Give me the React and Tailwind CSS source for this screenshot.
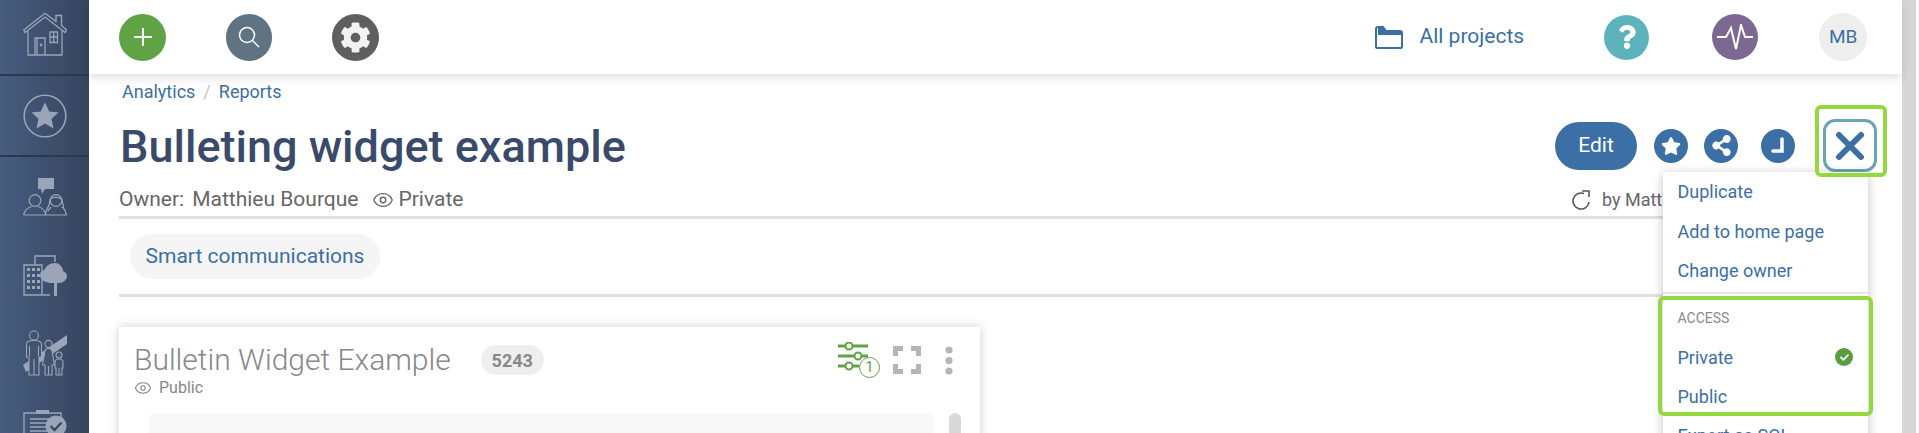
import React from "react";
import { FaCog, FaStar, FaShareAlt, FaQuestion, FaCheck } from "react-icons/fa";
import { Eye } from "lucide-react";

const House = () => (
  <svg width="44" height="44" viewBox="0 0 44 44" fill="none" stroke="#9aa5b8" strokeWidth="1.3">
    <path d="M0.7 18 22 1.2 33 9.5V3.500h5.500v10L43.500 18 42 20.500 22 5 2 20.500z" />
    <path d="M5 19v24h34V19" />
    <path d="M12 43V26h10v17" />
    <path d="M14 26.500v16" />
    <circle cx="18" cy="33" r="0.8" fill="#9aa5b8" />
    <path d="M27 20h7.500v10.500H27zM30.700 20v10.500M27 25h7.500" />
  </svg>
);
const StarCircle = () => (
  <svg width="44" height="44" viewBox="0 0 44 44">
    <circle cx="22" cy="22" r="20.800" fill="none" stroke="#9aa5b8" strokeWidth="1.6" />
    <path d="M22 8.500l4.200 9 9.300 1-7 6.300 2 9.600L22 29.500l-8.500 4.900 2-9.600-7-6.300 9.300-1z" fill="#9aa5b8" />
  </svg>
);
const People = () => (
  <svg width="44" height="38" viewBox="0 0 44 38" fill="none" stroke="#9aa5b8" strokeWidth="1.2">
    <path d="M15 0h16v11h-9l-3 5-1-5h-3z" fill="#9aa5b8" stroke="none" />
    <circle cx="12" cy="22.500" r="5.800" />
    <path d="M0.600 37c1-6 5-7.500 8-8.500M23 37c-1-6-5-7.500-8-8.500M0.600 37H43.500" />
    <circle cx="33" cy="22.500" r="5.800" />
    <path d="M27 22c1-3 9-4 12 0 1 5 2 6 1.500 8M27 22c0 4-1 6-3 9l-2 6M43.500 37c-1-4-2-7-5-8M28 29c-1 1-2 2-3 4" />
  </svg>
);
const Building = () => (
  <svg width="44" height="41" viewBox="0 0 44 41" fill="none" stroke="#9aa5b8" strokeWidth="1.4">
    <path d="M1 10h18v30H1zM1 40h26M12 10V1h20v6" />
    <g fill="#9aa5b8" stroke="none">
      <path d="M4 13h3v3H4zM9 13h3v3H9zM14 13h3v3h-3zM4 19h3v3H4zM9 19h3v3H9zM14 19h3v3h-3zM4 25h3v3H4zM9 25h3v3H9zM14 25h3v3h-3zM4 31h3v3H4zM9 31h3v3H9zM14 31h3v3h-3z" />
      <path d="M32 8c5 0 8 5 8 8 3 2 4 3 4 5 0 4-4 7-8 7h-2v13h-3V28h-2c-5 0-12-2-12-8 0-3 3-4 5-6 1-3 5-6 10-6z" />
    </g>
  </svg>
);
const Family = () => (
  <svg width="44" height="46" viewBox="0 0 44 46" fill="none" stroke="#9aa5b8" strokeWidth="1.1">
    <path d="M0 35 44 5v9L3 42z" fill="#9aa5b8" stroke="none" />
    <circle cx="11" cy="5.500" r="4.500" fill="#40536f" />
    <path d="M3.500 14c0-2 3-3.500 7.500-3.500s7.500 1.500 7.500 3.500v13h-2.500v18h-10V27H3.500zM11 29v16M6.500 16v10M15.500 16v10" fill="#40536f" />
    <circle cx="25.500" cy="14" r="3.600" fill="#40536f" />
    <path d="M21.500 24c0-4 1.500-5.500 4-5.500s4 1.500 4 5.500l2 11h-2.500v10h-7V35H19.500zM25.500 36v9" fill="#40536f" />
    <circle cx="36" cy="25" r="3" fill="#40536f" />
    <path d="M32 32c0-2 1.500-3 4-3s4 1 4 3v6h-1v7h-6v-7h-1zM36 38v7" fill="#40536f" />
  </svg>
);
const Clip = () => (
  <svg width="44" height="23" viewBox="0 0 44 23" fill="none" stroke="#9aa5b8" strokeWidth="1.4">
    <path d="M1 3h37v22H1z" />
    <path d="M13 0h13v4H13z" fill="#9aa5b8" stroke="none" />
    <path d="M7 9h24M7 13h20M7 17h20M7 21h20" />
    <circle cx="33" cy="16" r="10.500" fill="#9aa5b8" stroke="none" />
    <path d="M27.500 16l4 4 7-7.500" stroke="#3a4a66" strokeWidth="2.400" />
  </svg>
);

const Circle = ({ cls, children }) => (
  <div className={`flex items-center justify-center rounded-full ${cls}`}>{children}</div>
);

const MenuItem = ({ label, children, h = "h-[39.5px]" }) => (
  <div className={`flex items-center justify-between pb-[1px] pl-[14.5px] pr-[15px] text-[18px] text-[#3b6fa5] ${h}`}>
    <span>{label}</span>
    {children}
  </div>
);

export default function App() {
  return (
    <div className="flex h-[433px] w-[1919px] overflow-hidden bg-white" style={{ fontFamily: "Roboto, sans-serif" }}>
      <aside className="flex w-[89px] shrink-0 flex-col bg-gradient-to-r from-[#475c7f] to-[#36455f]">
        <div className="flex h-[76px] shrink-0 justify-center border-b-2 border-[#2a3850] pt-[12px]"><House /></div>
        <div className="flex h-[81px] shrink-0 justify-center border-b-2 border-[#2a3850] pt-[18px]"><StarCircle /></div>
        <div className="flex h-[98px] shrink-0 justify-center pt-[21px]"><People /></div>
        <div className="flex h-[75px] shrink-0 justify-center"><Building /></div>
        <div className="flex h-[80px] shrink-0 justify-center"><Family /></div>
        <div className="flex h-[23px] shrink-0 justify-center"><Clip /></div>
      </aside>

      <main className="relative w-[1813px] shrink-0">
        <header className="relative z-10 flex h-[74px] items-center bg-white pl-[30px] shadow-[0_4px_10px_rgba(0,0,0,0.12)]">
          <Circle cls="h-[47px] w-[47px] bg-[#60a344]">
            <svg width="20" height="20" viewBox="0 0 20 20" stroke="#fff" strokeWidth="2"><path d="M10 1v18M1 10h18" /></svg>
          </Circle>
          <Circle cls="ml-[60px] h-[47px] w-[46px] bg-[#5f7383]">
            <svg width="22" height="22" viewBox="0 0 22 22" fill="none" stroke="#fff" strokeWidth="1.5"><circle cx="9" cy="9" r="7.500" /><path d="M14.500 14.500 21 21" /></svg>
          </Circle>
          <Circle cls="ml-[60px] h-[47px] w-[47px] bg-[#5f5f5f]"><FaCog className="text-[31px] text-[#f2f2f2]" /></Circle>
          <div className="ml-[996px] flex items-center text-[21px] text-[#3b6fa5]">
            <svg width="28" height="23" viewBox="0 0 28 23" fill="none" stroke="#3b6fa5" strokeWidth="2"><path d="M1 21V3q0-2 2-2h5l3 4h14q2 0 2 2v14q0 1-1 1H2q-1 0-1-1z" /><path d="M3 2h5l3 4h15v3H3z" fill="#3b6fa5" stroke="none" /></svg>
            <span className="ml-[16.5px]">All projects</span>
          </div>
          <Circle cls="ml-[80px] h-[45px] w-[45px] bg-[#5db3bb]"><FaQuestion className="text-[24px] text-white" /></Circle>
          <Circle cls="ml-[63px] h-[46px] w-[46px] bg-[#7d6892]">
            <svg width="38" height="26" viewBox="0 0 38 26" fill="none" stroke="#fff" strokeWidth="2"><path d="M1 13h9l5-9 5 21 5-24 4 12h8" /></svg>
          </Circle>
          <Circle cls="ml-[61px] h-[48px] w-[48px] bg-[#eeeeee] text-[19px] text-[#3b6fa5]">MB</Circle>
        </header>

        <div className="w-[1779px] pl-[30px]">
          <nav className="flex h-[35px] items-center pb-[1px] text-[18px] text-[#3b6fa5]">
            <span className="ml-[3px]">Analytics</span>
            <span className="mx-[8px] text-[#c8c8c8]">/</span>
            <span>Reports</span>
          </nav>

          <div className="flex h-[73px] items-center">
            <h1 className="ml-[1px] pt-[2px] text-[45px] font-medium text-[#3a4a6b]">Bulleting widget example</h1>
            <div className="ml-auto mr-[-9px] flex items-center">
              <div className="flex h-[48px] w-[82px] items-center justify-center rounded-full bg-[#3b6fa5] text-[21px] text-white">Edit</div>
              <Circle cls="ml-[17px] h-[34px] w-[34px] bg-[#3b6fa5]"><FaStar className="text-[20px] text-white" /></Circle>
              <Circle cls="ml-[16px] h-[34px] w-[34px] bg-[#3b6fa5]"><FaShareAlt className="text-[21px] text-white" /></Circle>
              <Circle cls="ml-[23px] h-[34px] w-[34px] bg-[#3b6fa5]">
                <svg width="18" height="18" viewBox="0 0 18 18" fill="none" stroke="#fff" strokeWidth="3.500" strokeLinecap="round"><path d="M13 2v12H4" /></svg>
              </Circle>
              <div className="ml-[28px] flex h-[53px] w-[54px] items-center justify-center rounded-[12px] border-[3px] border-[#6ba5b3]">
                <svg width="30" height="30" viewBox="0 0 30 30" stroke="#3b6fa5" strokeWidth="6" strokeLinecap="round"><path d="M4 4l22 22M26 4 4 26" /></svg>
              </div>
            </div>
          </div>

          <div className="flex h-[34px] items-center pt-[1px] text-[21px] text-[#666666]">
            <span>Owner:</span>
            <span className="ml-[8px]">Matthieu Bourque</span>
            <Eye className="ml-[14px] h-[22px] w-[22px]" strokeWidth={1.5} />
            <span className="ml-[4px]">Private</span>
            <div className="ml-auto flex items-center text-[18px]">
              <svg width="20" height="22" viewBox="0 0 20 22" fill="none" stroke="#555" strokeWidth="1.6"><path d="M17 13a8 8 0 1 1-5-8.400M10 2h7v6" /></svg>
              <span className="ml-[10px] mr-[172px]">by Matthieu</span>
            </div>
          </div>
          <div className="h-[3px] bg-[#e0e0e0]" />

          <div className="ml-[11px] mt-[15px] flex h-[45px] w-[250px] items-center justify-center rounded-full bg-[#f5f5f5] pt-[1px] text-[21px] text-[#3b6fa5]">Smart communications</div>
          <div className="mt-[15px] h-[3px] bg-[#e0e0e0]" />

          <section className="mt-[30px] w-[861px] bg-white shadow-[0_0_10px_rgba(0,0,0,0.2)]">
            <div className="h-[86px] pl-[15px] pt-[15px]">
              <div className="flex items-center">
                <span className="text-[30px] font-light leading-[36px] text-[#888888]">Bulletin Widget Example</span>
                <span className="ml-[30px] flex h-[30px] w-[63px] items-center justify-center rounded-full bg-[#eeeeee] text-[18px] font-bold text-[#888888]">5243</span>
                <div className="ml-auto flex items-center pr-[27px]">
                  <div className="relative h-[36px] w-[41px]">
                    <svg width="30" height="30" viewBox="0 0 30 30" fill="none" stroke="#60a344" strokeWidth="3">
                      <path d="M0 4h7M15 4h15M0 14h16M24 14h6M0 24h7M15 24h6" />
                      <circle cx="11" cy="4" r="3.500" strokeWidth="2" /><circle cx="20" cy="14" r="3.500" strokeWidth="2" /><circle cx="11" cy="24" r="3.500" strokeWidth="2" />
                    </svg>
                    <span className="absolute left-[21px] top-[15px] flex h-[21px] w-[21px] items-center justify-center rounded-full border border-[#60a344] bg-white text-[15px] text-[#60a344]">1</span>
                  </div>
                  <svg className="ml-[14px]" width="28" height="28" viewBox="0 0 28 28" fill="none" stroke="#b5b5b5" strokeWidth="5"><path d="M2.500 10V2.500H10M18 2.500h7.500V10M25.500 18v7.500H18M10 25.500H2.500V18" /></svg>
                  <svg className="ml-[24px]" width="8" height="29" viewBox="0 0 8 29" fill="#b5b5b5"><circle cx="4" cy="4" r="3.600" /><circle cx="4" cy="14.500" r="3.600" /><circle cx="4" cy="25" r="3.600" /></svg>
                </div>
              </div>
              <div className="flex items-center text-[16px] leading-[20px] text-[#888888]">
                <Eye className="h-[18px] w-[18px]" strokeWidth={1.5} />
                <span className="ml-[7px]">Public</span>
              </div>
            </div>
            <div className="flex items-start pl-[30px]">
              <div className="h-[40px] w-[785px] rounded-t-[6px] bg-[#f8f8f8]" />
              <div className="ml-[15px] h-[40px] w-[12px] rounded-t-full bg-[#d9d9d9]" />
            </div>
          </section>
        </div>

        <div className="absolute left-[1574px] top-[172px] z-20 h-[280px] w-[205px] bg-white shadow-[0_2px_10px_rgba(0,0,0,0.25)]">
          <div className="pt-[0.5px]">
            <MenuItem label="Duplicate" />
            <MenuItem label="Add to home page" />
            <MenuItem label="Change owner" />
          </div>
          <div className="mt-[1px] h-[2px] bg-[#e4e4e4]" />
          <div className="flex h-[44px] items-center pl-[14.5px] pt-[5px] text-[14px] text-[#8a8a8a]">ACCESS</div>
          <MenuItem label="Private" h="h-[39px]">
            <div className="flex h-[18px] w-[18px] items-center justify-center rounded-full bg-[#5a9c40]"><FaCheck className="text-[9px] text-white" /></div>
          </MenuItem>
          <MenuItem label="Public" h="h-[39px]" />
          <MenuItem label="Export as SQL" />
        </div>

        <div className="absolute left-[1726px] top-[105px] z-30 h-[72px] w-[72px] rounded-[6px] border-[4px] border-[#93d83e]" />
        <div className="absolute left-[1569px] top-[296px] z-30 h-[120px] w-[215px] rounded-[6px] border-[4px] border-[#93d83e]" />
      </main>

      <div className="h-full w-[14px] shrink-0 bg-[#d6d6d6]" />
      <div className="w-[3px] shrink-0 bg-white" />
    </div>
  );
}
